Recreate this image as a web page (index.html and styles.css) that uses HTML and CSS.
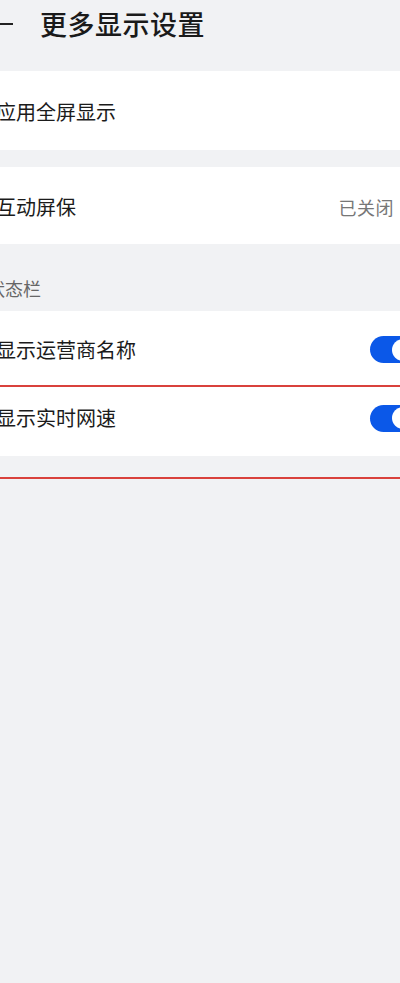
FILE: index.html
```html
<!DOCTYPE html>
<html lang="zh-CN">
<head>
    <meta charset="UTF-8">
    <meta name="viewport" content="width=device-width, initial-scale=1.0">
    <title>更多显示设置</title>
    <link rel="stylesheet" href="styles.css">
</head>
<body>
    <div class="page">
        <header class="topbar">
            <span class="back"></span>
            <h1>更多显示设置</h1>
        </header>

        <div class="row row-first">
            <span class="label">应用全屏显示</span>
        </div>

        <div class="row row-second">
            <span class="label">互动屏保</span>
            <span class="value">已关闭</span>
            <span class="chevron"></span>
        </div>

        <div class="section-title">状态栏</div>

        <div class="row row-carrier">
            <span class="label">显示运营商名称</span>
            <span class="switch on"><span class="knob"></span></span>
        </div>

        <div class="highlight">
            <div class="row row-speed">
                <span class="label">显示实时网速</span>
                <span class="switch on"><span class="knob"></span></span>
            </div>
        </div>
    </div>
</body>
</html>
```

FILE: styles.css
```css
/* settings page */
html, body {
    margin: 0;
    padding: 0;
    background-color: #f1f2f4;
    overflow: hidden;
}

body {
    font-family: "Noto Sans CJK SC", "Noto Sans", sans-serif;
    color: #1b1b1b;
    height: 983px;
}

.page {
    width: 468px;
    margin-left: -28px;
}

.topbar {
    height: 71px;
    display: flex;
    align-items: flex-start;
    padding: 8px 0 0 28px;
    box-sizing: border-box;
}

.back {
    width: 13px;
    height: 2px;
    background-color: #222;
    margin-top: 15px;
    margin-right: 27px;
}

.topbar h1 {
    margin: 0;
    font-size: 27px;
    font-weight: 500;
    line-height: 32px;
    letter-spacing: 0.5px;
    color: #1a1a1a;
}

.row {
    background-color: #fff;
    display: flex;
    align-items: center;
    padding: 0 24px;
    box-sizing: border-box;
}

.label {
    font-size: 20px;
    line-height: 28px;
    flex: 1;
}

.row-first {
    height: 79px;
    padding-top: 3px;
}

.row-second {
    height: 77px;
    margin-top: 17px;
    padding-top: 3px;
}

.value {
    font-size: 18px;
    letter-spacing: 0.5px;
    color: #777;
}

.chevron {
    width: 8px;
    height: 8px;
    border-top: 2px solid #bbb;
    border-right: 2px solid #bbb;
    transform: rotate(45deg);
    margin-left: 12px;
}

.section-title {
    height: 67px;
    padding: 32px 24px 0 15px;
    box-sizing: border-box;
    font-size: 18px;
    line-height: 24px;
    color: #666;
}

.row-carrier {
    height: 74px;
    padding-top: 3px;
}

.highlight {
    border-top: 2px solid #d9413c;
    border-bottom: 2px solid #d9413c;
    padding-bottom: 21px;
}

.row-speed {
    height: 69px;
    padding-bottom: 7px;
}

.switch {
    width: 46px;
    height: 27px;
    border-radius: 14px;
    background-color: #0b58e8;
    position: relative;
}

.switch .knob {
    position: absolute;
    top: 2.5px;
    right: 2px;
    width: 22px;
    height: 22px;
    border-radius: 50%;
    background-color: #fff;
}
```
